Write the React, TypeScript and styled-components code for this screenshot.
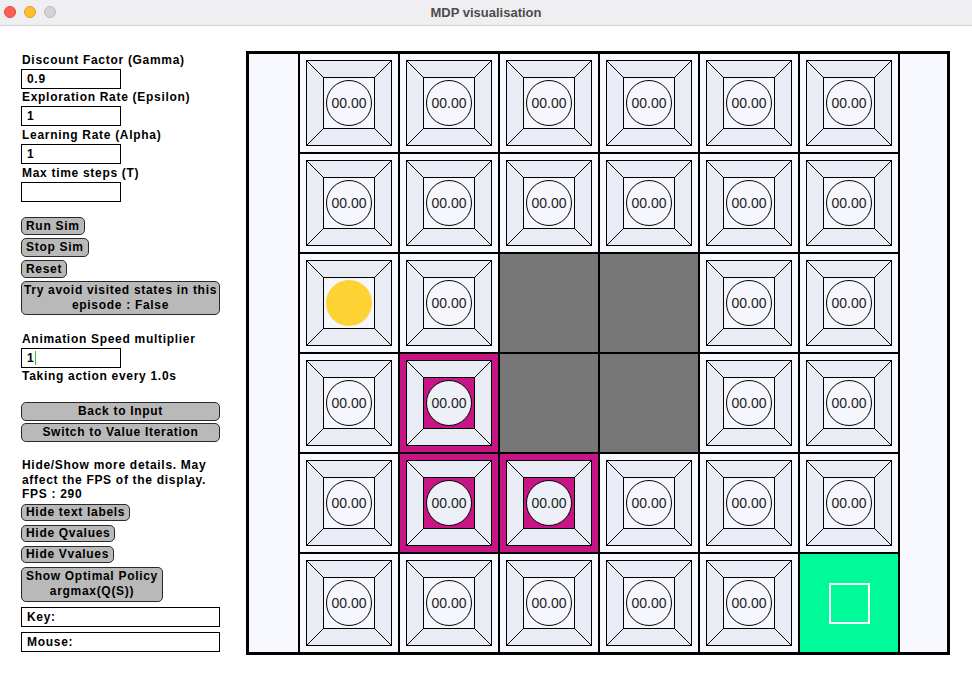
import React from "react";
import styled, { createGlobalStyle } from "styled-components";

const Global = createGlobalStyle`
  html, body { margin: 0; padding: 0; background: #ffffff; }
  body { width: 972px; height: 676px; overflow: hidden; font-family: "Liberation Sans", Arial, sans-serif; }
  * { box-sizing: border-box; }
`;

const Window = styled.div`
  width: 972px;
  height: 676px;
  display: flex;
  flex-direction: column;
  background: #ffffff;
`;

const TitleBar = styled.div`
  height: 26px;
  flex: none;
  display: grid;
  grid-template-columns: 1fr auto 1fr;
  align-items: center;
  background: #efeff1;
  border-bottom: 1px solid #d4d4d6;
`;

const Lights = styled.div`
  display: flex;
  gap: 8px;
  padding-left: 4px;
  padding-bottom: 1px;
`;

const Light = styled.span<{ $fill: string; $edge: string }>`
  width: 12px;
  height: 12px;
  border-radius: 50%;
  background: ${(p) => p.$fill};
  border: 1px solid ${(p) => p.$edge};
`;

const Title = styled.div`
  font-family: "Liberation Sans", Arial, sans-serif;
  font-weight: 700;
  font-size: 13px;
  color: #4c4c4c;
  padding-bottom: 1px;
`;

const Body = styled.div`
  flex: 1;
  display: flex;
  align-items: flex-start;
`;

const Sidebar = styled.div`
  width: 246px;
  flex: none;
  padding: 26px 0 0 21px;
  display: flex;
  flex-direction: column;
  align-items: flex-start;
  font-family: "Liberation Sans", Arial, sans-serif;
  font-weight: 700;
  font-size: 12px;
  color: #000;
  letter-spacing: 0.7px;
`;

const Label = styled.div<{ $mt?: number }>`
  height: 17px;
  line-height: 17px;
  padding-left: 1px;
  margin-top: ${(p) => p.$mt ?? 0}px;
  white-space: nowrap;
`;

const Field = styled.div`
  width: 100px;
  height: 20px;
  border: 1px solid #000;
  background: #fff;
  padding-left: 5px;
  line-height: 18px;
  display: flex;
  align-items: center;
`;

const Caret = styled.span`
  display: inline-block;
  width: 1px;
  height: 14px;
  background: #1fd21f;
  margin-left: 1px;
`;

const Stack = styled.div<{ $mt: number; $gap: number }>`
  display: flex;
  flex-direction: column;
  align-items: flex-start;
  gap: ${(p) => p.$gap}px;
  margin-top: ${(p) => p.$mt}px;
`;

const Button = styled.div<{ $h?: number; $wide?: boolean }>`
  height: ${(p) => p.$h ?? 18}px;
  width: ${(p) => (p.$wide ? "199px" : "auto")};
  padding: 0 4px;
  border: 1px solid #2a2a2a;
  border-radius: 5px;
  background: #b9b9b9;
  display: flex;
  align-items: center;
  justify-content: center;
  text-align: center;
  line-height: 15px;
  white-space: nowrap;
`;

const Note = styled.div<{ $mt: number }>`
  margin-top: ${(p) => p.$mt}px;
  line-height: 14.5px;
  padding-left: 1px;
`;

const InfoBox = styled.div<{ $mt: number }>`
  margin-top: ${(p) => p.$mt}px;
  width: 199px;
  height: 20px;
  border: 1px solid #000;
  background: #fff;
  padding-left: 5px;
  line-height: 18px;
`;

const Panel = styled.div`
  margin-top: 25px;
  width: 704px;
  height: 604px;
  border: 3px solid #000;
  background: #f8f8ff;
  display: flex;
  padding-left: 49px;
`;

const Grid = styled.div`
  display: grid;
  grid-template-columns: repeat(6, 98px);
  grid-auto-rows: 98px;
  gap: 2px;
  padding: 0 2px;
  background: #000;
  height: 598px;
`;

type Kind = "normal" | "wall" | "visited" | "agent" | "goal";

const cellBg: Record<Kind, string> = {
  normal: "#f8f8ff",
  agent: "#f8f8ff",
  visited: "#c71585",
  wall: "#777777",
  goal: "#00fa9a",
};

const Cell = styled.div<{ $kind: Kind }>`
  width: 98px;
  height: 98px;
  background: ${(p) => cellBg[p.$kind]};
  display: flex;
  align-items: center;
  justify-content: center;
`;

const GoalMark = styled.div`
  width: 41px;
  height: 41px;
  border: 2px solid #ffffff;
`;

function Tile({ kind }: { kind: Kind }) {
  const visited = kind === "visited";
  return (
    <svg width="98" height="98" viewBox="0 0 98 98">
      <rect x="6.5" y="6.5" width="85" height="85" fill="#e9ecf4" stroke="#000" strokeWidth="1" />
      <rect x="23.5" y="23.5" width="51" height="51" fill={visited ? "#c71585" : "#f6f6fd"} stroke="#000" strokeWidth="1" />
      <line x1="6.5" y1="6.5" x2="23.5" y2="23.5" stroke="#000" strokeWidth="1" />
      <line x1="91.5" y1="6.5" x2="74.5" y2="23.5" stroke="#000" strokeWidth="1" />
      <line x1="6.5" y1="91.5" x2="23.5" y2="74.5" stroke="#000" strokeWidth="1" />
      <line x1="91.5" y1="91.5" x2="74.5" y2="74.5" stroke="#000" strokeWidth="1" />
      {kind === "agent" ? (
        <circle cx="49" cy="49" r="23" fill="#fdd233" />
      ) : (
        <>
          <circle cx="49" cy="49" r="22.5" fill={visited ? "#eef0f7" : "#f6f6fd"} stroke="#000" strokeWidth="1" />
          <text
            x="49"
            y="54"
            textAnchor="middle"
            fontFamily="'Liberation Sans', Arial, sans-serif"
            fontSize="14"
            fill="#222"
          >
            00.00
          </text>
        </>
      )}
    </svg>
  );
}

const layout: Kind[][] = [
  ["normal", "normal", "normal", "normal", "normal", "normal"],
  ["normal", "normal", "normal", "normal", "normal", "normal"],
  ["agent", "normal", "wall", "wall", "normal", "normal"],
  ["normal", "visited", "wall", "wall", "normal", "normal"],
  ["normal", "visited", "visited", "normal", "normal", "normal"],
  ["normal", "normal", "normal", "normal", "normal", "goal"],
];

export default function App() {
  return (
    <>
      <Global />
      <Window>
        <TitleBar>
          <Lights>
            <Light $fill="#fe5f57" $edge="#e2463f" />
            <Light $fill="#febc2e" $edge="#e0a028" />
            <Light $fill="#d3d3d5" $edge="#bcbcbe" />
          </Lights>
          <Title>MDP visualisation</Title>
          <div />
        </TitleBar>
        <Body>
          <Sidebar>
            <Label>Discount Factor (Gamma)</Label>
            <Field>0.9</Field>
            <Label>Exploration Rate (Epsilon)</Label>
            <Field>1</Field>
            <Label $mt={1}>Learning Rate (Alpha)</Label>
            <Field>1</Field>
            <Label $mt={1}>Max time steps (T)</Label>
            <Field />
            <Stack $mt={15} $gap={3}>
              <Button>Run Sim</Button>
              <Button $h={19}>Stop Sim</Button>
              <Button>Reset</Button>
              <Button $wide $h={34}>
                Try avoid visited states in this
                <br />
                episode : False
              </Button>
            </Stack>
            <Label $mt={16}>Animation Speed multiplier</Label>
            <Field>
              1<Caret />
            </Field>
            <Label>Taking action every 1.0s</Label>
            <Stack $mt={17} $gap={2}>
              <Button $wide $h={19}>Back to Input</Button>
              <Button $wide $h={19}>Switch to Value Iteration</Button>
            </Stack>
            <Note $mt={16}>
              Hide/Show more details. May
              <br />
              affect the FPS of the display.
              <br />
              FPS : 290
            </Note>
            <Stack $mt={2} $gap={4}>
              <Button $h={17}>Hide text labels</Button>
              <Button $h={17}>Hide Qvalues</Button>
              <Button $h={17}>Hide Vvalues</Button>
              <Button $h={35}>
                Show Optimal Policy
                <br />
                argmax(Q(S))
              </Button>
            </Stack>
            <InfoBox $mt={5}>Key:</InfoBox>
            <InfoBox $mt={5}>Mouse:</InfoBox>
          </Sidebar>
          <Panel>
            <Grid>
              {layout.flatMap((row, r) =>
                row.map((kind, c) => (
                  <Cell key={`${r}-${c}`} $kind={kind}>
                    {kind === "wall" ? null : kind === "goal" ? <GoalMark /> : <Tile kind={kind} />}
                  </Cell>
                ))
              )}
            </Grid>
          </Panel>
        </Body>
      </Window>
    </>
  );
}
